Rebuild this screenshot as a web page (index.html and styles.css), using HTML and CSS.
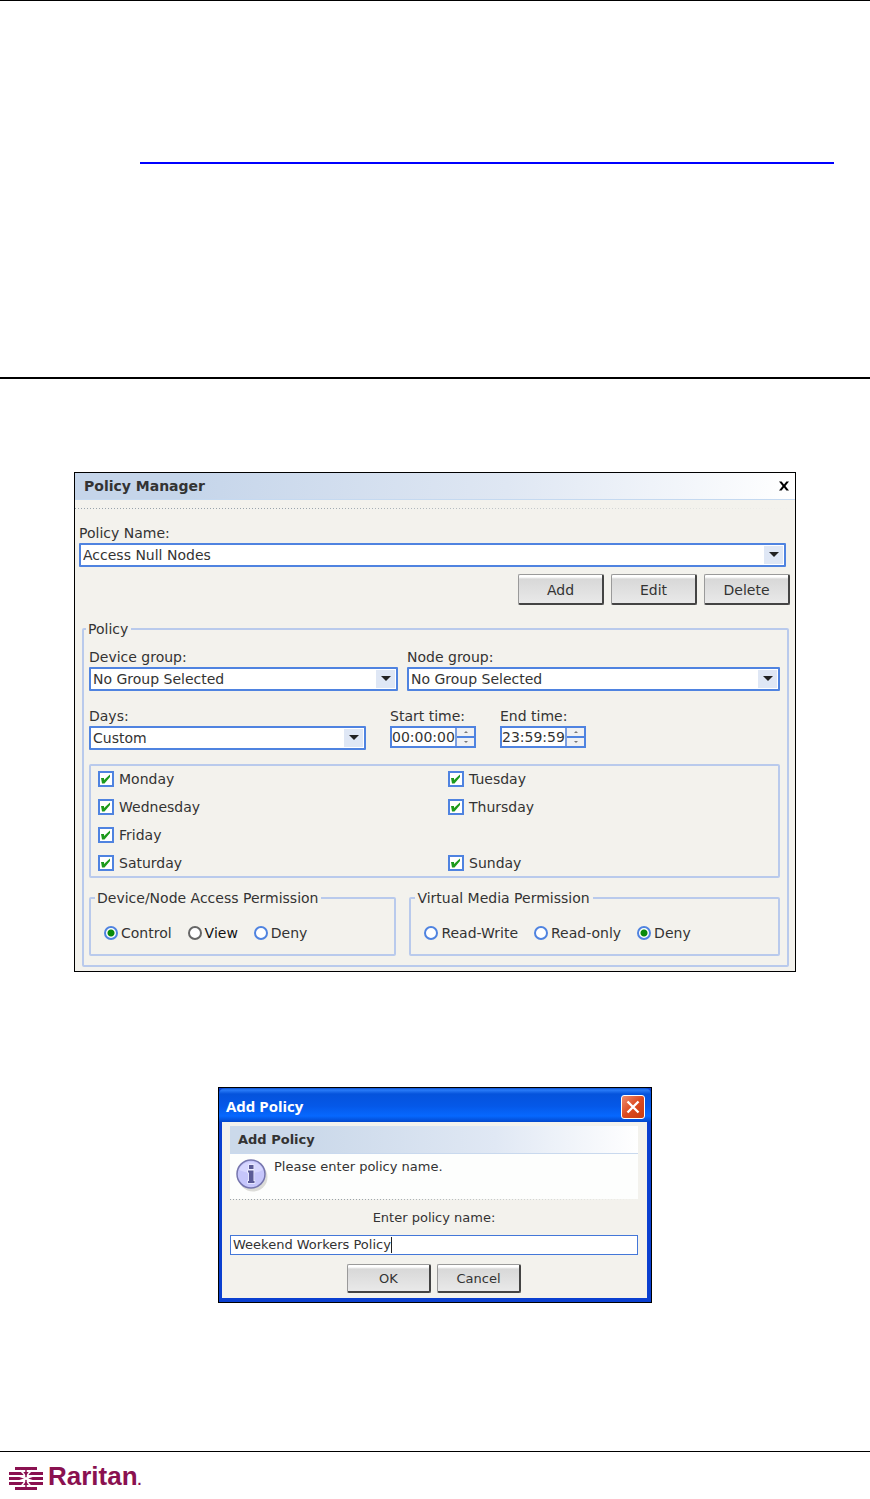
FILE: index.html
```html
<!DOCTYPE html>
<html lang="en">
<head>
<meta charset="utf-8">
<title>Policy Manager</title>
<link rel="stylesheet" href="styles.css">
</head>
<body>
<main class="page">
  <div class="intro"><div class="underline"></div></div>

  <section class="panel">
    <header class="panel-head">
      <h1>Policy Manager</h1>
      <button class="close" type="button" aria-label="Close"><svg width="12" height="12" viewBox="0 0 12 12"><path d="M1 1.500h2.600L6 4.600l2.400-3.100H11L7.400 6 11 10.500H8.400L6 7.400 3.600 10.500H1L4.600 6z"/></svg></button>
    </header>
    <div class="dots"></div>
    <div class="panel-body">
      <div class="field name-field">
        <label for="policy-name">Policy Name:</label>
        <div class="select"><select id="policy-name"><option>Access Null Nodes</option></select></div>
      </div>
      <div class="actions">
        <button class="btn" type="button">Add</button>
        <button class="btn" type="button">Edit</button>
        <button class="btn" type="button">Delete</button>
      </div>
      <fieldset class="policy">
        <legend>Policy</legend>
        <div class="groups">
          <div class="field device">
            <label for="device-group">Device group:</label>
            <div class="select"><select id="device-group"><option>No Group Selected</option></select></div>
          </div>
          <div class="field node">
            <label for="node-group">Node group:</label>
            <div class="select"><select id="node-group"><option>No Group Selected</option></select></div>
          </div>
        </div>
        <div class="times">
          <div class="field days-field">
            <label for="days">Days:</label>
            <div class="select"><select id="days"><option>Custom</option></select></div>
          </div>
          <div class="field">
            <label for="start">Start time:</label>
            <div class="spin"><input id="start" type="text" value="00:00:00"><div class="steps"><button type="button" class="up" aria-label="Later"></button><button type="button" class="down" aria-label="Earlier"></button></div></div>
          </div>
          <div class="field">
            <label for="end">End time:</label>
            <div class="spin"><input id="end" type="text" value="23:59:59"><div class="steps"><button type="button" class="up" aria-label="Later"></button><button type="button" class="down" aria-label="Earlier"></button></div></div>
          </div>
        </div>
        <div class="week">
          <label><input type="checkbox" checked>Monday</label>
          <label><input type="checkbox" checked>Tuesday</label>
          <label><input type="checkbox" checked>Wednesday</label>
          <label><input type="checkbox" checked>Thursday</label>
          <label class="first"><input type="checkbox" checked>Friday</label>
          <label class="first"><input type="checkbox" checked>Saturday</label>
          <label><input type="checkbox" checked>Sunday</label>
        </div>
        <div class="permissions">
          <fieldset class="perm access">
            <legend>Device/Node Access Permission</legend>
            <div class="radios">
              <label><input type="radio" name="access" checked>Control</label>
              <label class="focused"><input type="radio" name="access">View</label>
              <label><input type="radio" name="access">Deny</label>
            </div>
          </fieldset>
          <fieldset class="perm media">
            <legend>Virtual Media Permission</legend>
            <div class="radios">
              <label><input type="radio" name="media">Read-Write</label>
              <label><input type="radio" name="media">Read-only</label>
              <label><input type="radio" name="media" checked>Deny</label>
            </div>
          </fieldset>
        </div>
      </fieldset>
    </div>
  </section>

  <section class="dialog">
    <header class="dialog-title">
      <span>Add Policy</span>
      <button class="dialog-close" type="button" aria-label="Close"><svg width="14" height="14" viewBox="0 0 14 14"><path d="M1.500 1.500l11 11M12.500 1.500l-11 11" stroke="#fff" stroke-width="2.400"/></svg></button>
    </header>
    <div class="dialog-body">
      <h2>Add Policy</h2>
      <div class="message">
        <svg width="36" height="36" viewBox="0 0 36 36"><circle cx="17" cy="18" r="14.500" fill="#dcdcd8"/><circle cx="15" cy="15" r="14" fill="#c6c6fb" stroke="#7575ad" stroke-width="1.500"/><path d="M3 11a13 13 0 0 1 24 0q-11 6-24 0z" fill="#d6d6ff"/><path d="M13 6h4.500v4H13zM12 11.500h5.500V22h1v2H12v-2h1v-8.500h-1z" fill="#5a5a96" stroke="#eeeeff" stroke-width="1.500" paint-order="stroke"/></svg>
        <p>Please enter policy name.</p>
      </div>
      <div class="dots"></div>
      <label class="prompt" for="new-name">Enter policy name:</label>
      <div class="textbox"><input id="new-name" type="text" value="Weekend Workers Policy"></div>
      <div class="dialog-actions">
        <button class="btn" type="button">OK</button>
        <button class="btn" type="button">Cancel</button>
      </div>
    </div>
  </section>

  <footer class="footer">
    <svg class="mark" width="38" height="27" viewBox="0 0 38 27"><path d="M7 2h22v3H7zM1 7h34v3H1zM1 12h34v3H1zM1 17h34v3H1zM7 22h22v3H7z" fill="#8a1150"/><path d="M12 5.500q4 2 6 8 2-6 6-8M12 21.500q4-2 6-8 2 6 6 8M10 10.800l8 2.700 8-2.700M10 16.200l8-2.700 8 2.700" fill="none" stroke="#fff" stroke-width="1.500"/><path d="M18 5v17" stroke="#8a1150" stroke-width="1.500"/><circle cx="18" cy="13.500" r="1.500" fill="#fff"/></svg>
    <span class="brand">Raritan<span class="reg">.</span></span>
  </footer>
</main>
</body>
</html>
```
FILE: styles.css
```css
* { box-sizing: border-box; }
body {
  margin: 0;
  background: #fff;
  color: #333;
  font: 14px/16px "DejaVu Sans", sans-serif;
}
h1, h2, p { margin: 0; }
button, input, select { font: inherit; color: inherit; margin: 0; padding: 0; border-radius: 0; }
fieldset { margin: 0; padding: 0; min-width: 0; border: 2px solid #b9caec; border-radius: 2px; }
legend { padding: 0 3px 0 2px; margin-left: 4px; height: 16px; }

.page { display: flex; flex-direction: column; min-height: 100vh; border-top: 1px solid #000; }
.intro { padding: 161px 36px 213px 140px; border-bottom: 2px solid #000; }
.underline { height: 2px; background: #00f; }

.panel {
  width: calc(100% - 148px);
  margin: 93px auto 0;
  border: 1px solid #000;
  background: #f3f2ed;
}
.panel-head {
  display: flex;
  align-items: center;
  justify-content: space-between;
  height: 27px;
  padding: 0 5px 0 9px;
  border-bottom: 1px solid #c5d9f0;
  background: linear-gradient(90deg, #c5d5ea 15%, #dfe7f3 60%, #fff);
}
h1 { font-size: 14px; line-height: 18px; }
.close { display: flex; padding: 0; border: 0; background: none; }
.dots { height: 1px; margin-top: 8px; background: linear-gradient(90deg, transparent 30%, #f3f2ed), repeating-linear-gradient(90deg, #9aa4ac 0 1px, #f3f2ed 1px 3px); }
.panel-body { padding: 16px 4px 4px; }
.field { display: flex; flex-direction: column; gap: 2px; }
.name-field { margin-right: 5px; }

.select { position: relative; height: 24px; border: 2px solid #4f83e0; border-radius: 1px; background: #fff; }
.select select { width: 100%; height: 20px; padding: 0 24px 0 2px; border: 0; background: none; appearance: none; outline: 0; display: block; }
.select::before { content: ""; position: absolute; top: 1px; right: 1px; width: 19px; height: 18px; background: #dfe7f5; pointer-events: none; }
.select::after { content: ""; position: absolute; top: 7px; right: 5px; border: 5px solid transparent; border-top-color: #222; border-bottom: 0; pointer-events: none; }

.btn {
  width: 86px;
  height: 31px;
  padding-top: 1px;
  border: 1px solid #9a9a9a;
  border-right: 2px solid #444;
  border-bottom: 2px solid #444;
  border-radius: 2px;
  background: linear-gradient(#fff 0 2px, #d8d8d8 4px, #e9e9e9);
}
.actions { display: flex; justify-content: flex-end; gap: 7px; margin: 7px 1px 0 0; }

.policy { margin: 16px 2px 0 3px; padding: 12px 7px 9px 5px; }
.policy > legend { margin-left: -3px; }
.groups { display: flex; gap: 9px; }
.device { flex: 309; }
.node { flex: 373; }
.times { display: flex; gap: 24px; margin-top: 17px; }
.days-field { width: 277px; }
.spin { display: flex; width: 86px; height: 22px; border: 2px solid #4f83e0; background: #fff; }
.spin input { flex: 1; min-width: 0; border: 0; background: none; outline: 0; }
.steps { display: flex; flex-direction: column; gap: 2px; width: 19px; border-left: 2px solid #7d9fe0; background: #4f83e0; }
.steps button { flex: 1; display: flex; align-items: center; justify-content: center; border: 0; background: #f0f1f3; }
.steps button::after { content: ""; border: 0 solid transparent; border-width: 0 2px; }
.steps .up::after { border-bottom: 2px solid #777; }
.steps .down::after { border-top: 2px solid #777; }

.week {
  display: grid;
  grid-template-columns: 350px 1fr;
  row-gap: 12px;
  margin-top: 14px;
  padding: 5px 6px 5px 7px;
  border: 2px solid #b9caec;
  border-radius: 2px;
}
.week label, .radios label { display: flex; align-items: center; height: 16px; }
.week label { gap: 5px; }
.week .first { grid-column: 1; }
input[type="checkbox"] {
  appearance: none;
  width: 16px;
  height: 16px;
  border: 2px solid #4f83e0;
  background: #fff url("data:image/svg+xml,%3Csvg xmlns='http://www.w3.org/2000/svg' viewBox='0 0 12 12'%3E%3Cpath d='M1 5h3v2L10 1.500V4L4.500 10.500H2z' fill='%231c9a1c'/%3E%3C/svg%3E") center / 12px 12px;
}
.permissions { display: flex; gap: 13px; margin-top: 12px; }
.perm { padding-bottom: 13px; }
.access { flex: 307; }
.media { flex: 371; }
.radios { display: flex; gap: 16px; padding: 19px 0 0 13px; }
.radios label { gap: 3px; }
input[type="radio"] { appearance: none; width: 14px; height: 14px; border: 2px solid #4f83e0; border-radius: 50%; background: #fff; }
.focused { color: #111; }
.focused input[type="radio"] { border-color: #666; }
input[type="radio"]:checked { background: radial-gradient(circle, #0a8a0a 3px, #fff 4px); }

.dialog {
  width: 434px;
  max-width: 100%;
  margin: 115px auto 0;
  border: 1px solid #000;
  background: #0a3fd0;
  font-size: 13px;
}
.dialog-title {
  display: flex;
  align-items: center;
  justify-content: space-between;
  height: 34px;
  padding: 3px 6px 0 7px;
  border-radius: 6px 6px 0 0;
  background: linear-gradient(#0a4fd0, #2a7cf8 2px, #0553dc 6px, #0558e8 18px, #0668ff 28px, #0347cc);
  color: #fff;
  font: bold 15px/18px "Open Sans", sans-serif;
}
.dialog-title span { padding-bottom: 2px; }
.dialog-close { display: flex; align-items: center; justify-content: center; width: 24px; height: 24px; border: 1px solid #fff; border-radius: 3px; background: linear-gradient(135deg, #ee8c70, #dc4a20 50%, #c83c10); }
.dialog-body { margin: 0 4px 4px 3px; padding: 4px 9px 5px 8px; background: #f3f2ed; }
.dialog h2 { height: 28px; padding-left: 8px; border-bottom: 1px solid #c9d9ee; font-size: 13px; line-height: 28px; background: linear-gradient(90deg, #cbd9ea 20%, #e0e8f4 65%, #fff); }
.message { display: flex; gap: 2px; height: 45px; padding: 5px 6px; background: #fdfefd; }
.dialog .dots { margin: 0; }
.prompt { display: block; margin-top: 10px; text-align: center; }
.textbox { display: flex; height: 20px; margin-top: 9px; border: 1px solid #4477d8; background: #fff; }
.textbox input { field-sizing: content; padding-left: 2px; border: 0; background: none; outline: 0; }
.textbox::after { content: ""; width: 1px; height: 16px; margin-top: 1px; background: #222; }
.dialog-actions { display: flex; justify-content: center; gap: 6px; margin-top: 9px; }
.dialog .btn { width: 84px; height: 29px; }

.footer { display: flex; align-items: center; margin-top: auto; height: 48px; padding: 5px 8px 0; border-top: 1px solid #000; color: #8a1150; font: bold 26px/28px "Liberation Sans", sans-serif; }
.mark { margin-right: 2px; }
.reg { font-size: 14px; }
```
